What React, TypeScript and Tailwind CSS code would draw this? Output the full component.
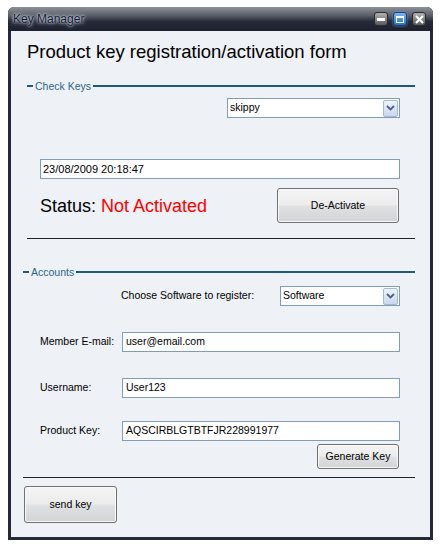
import React from "react";

const btn =
  "flex items-center justify-center rounded-[3px] border border-[#707070] bg-[linear-gradient(to_bottom,#f4f4f4_0%,#ececec_48%,#e0e1e2_52%,#d2d3d5_100%)] text-[10.5px] text-black shadow-[inset_0_0_0_1px_#fafafa]";

function Dropdown({ value, className }: { value: string; className: string }) {
  return (
    <div className={`flex h-[20px] items-center border border-[#7f9db9] bg-white ${className}`}>
      <span className="flex-1 pl-[2px] text-[10.5px] text-black">{value}</span>
      <div className="mr-[1px] flex h-[17px] w-[15px] items-center justify-center rounded-[2px] border border-[#a5b8d6] bg-[linear-gradient(to_bottom,#eef3fb,#c9d7ef)]">
        <svg width="9" height="6" viewBox="0 0 9 6">
          <path d="M1 1 L4.5 4.5 L8 1" fill="none" stroke="#4d6185" strokeWidth="1.8" />
        </svg>
      </div>
    </div>
  );
}

function TextBox({ value, className }: { value: string; className: string }) {
  return (
    <div className={`flex h-[20px] items-center border border-[#7f9db9] bg-white pl-[2px] text-[10.5px] text-black ${className}`}>
      {value}
    </div>
  );
}

function GroupHeader({ label, ml }: { label: string; ml: string }) {
  return (
    <div className={`flex h-[14px] items-center mr-[15px] ${ml}`}>
      <div className="h-[2px] w-[6px] bg-[#1c5a7d]" />
      <span className="px-[2px] text-[10.5px] leading-[14px] text-[#2a6690]">{label}</span>
      <div className="h-[2px] flex-1 bg-[#1c5a7d]" />
    </div>
  );
}

export default function App() {
  return (
    <div className="h-[549px] w-[442px] bg-white pl-[8px] pt-[7px] font-['Liberation_Sans',Arial,sans-serif]">
      <div className="flex h-[533px] w-[425px] flex-col rounded-t-[6px] bg-[#262a36]">
        {/* Title bar */}
        <div className="relative flex h-[24px] items-center rounded-t-[6px] bg-[linear-gradient(to_bottom,#8d9198_0%,#5a5e68_35%,#272b38_60%,#1d2130_100%)] pl-[5px]">
          <span className="text-[12px] text-[#111a33] [text-shadow:0_0_2px_#f0f5fc,0_0_4px_#d5e2f4]">
            Key Manager
          </span>
          <div className="ml-auto mr-[7px] flex items-center gap-[5px]">
            <div className="flex h-[14px] w-[14px] items-center justify-center rounded-[3px] border border-[#2a2a2a] bg-[linear-gradient(to_bottom,#b0b0b0,#5a5a5a)]">
              <div className="h-[3px] w-[8px] bg-white" />
            </div>
            <div className="flex h-[14px] w-[14px] items-center justify-center rounded-[3px] border border-[#1b3f73] bg-[linear-gradient(to_bottom,#7fb6ef,#2c6fc4)] shadow-[0_0_2px_#6aa8ee]">
              <div className="h-[7px] w-[8px] border-[1.5px] border-white border-t-[2.5px]" />
            </div>
            <div className="flex h-[14px] w-[14px] items-center justify-center rounded-[3px] border border-[#2a2a2a] bg-[linear-gradient(to_bottom,#b0b0b0,#5a5a5a)]">
              <svg width="9" height="9" viewBox="0 0 9 9">
                <path d="M1 1 L8 8 M8 1 L1 8" stroke="white" strokeWidth="2" />
              </svg>
            </div>
          </div>
        </div>
        {/* Client area */}
        <div className="mx-[3px] flex h-[506px] flex-col bg-[#eef1f5]">
          <div className="ml-[16px] mt-[9px] h-[24px] text-[18.5px] leading-[24px] text-black">
            Product key registration/activation form
          </div>

          <div className="mt-[15px]">
            <GroupHeader label="Check Keys" ml="ml-[16px]" />
          </div>

          <div className="mt-[5px] flex justify-end mr-[30px]">
            <Dropdown value="skippy" className="w-[173px]" />
          </div>

          <TextBox value="23/08/2009 20:18:47" className="ml-[29px] mt-[41px] w-[360px] text-[11px]" />

          <div className="ml-[29px] mr-[31px] mt-[9px] flex h-[35px] items-center justify-between">
            <div className="pt-[1px] text-[18px] text-black">
              Status: <span className="text-[#ff0000]">Not Activated</span>
            </div>
            <button className={`${btn} h-[35px] w-[122px]`}>De-Activate</button>
          </div>

          <div className="ml-[16px] mr-[15px] mt-[15px] h-[1px] bg-[#1f2330]" />

          <div className="mt-[26px]">
            <GroupHeader label="Accounts" ml="ml-[12px]" />
          </div>

          <div className="mt-[7px] flex h-[20px] items-center">
            <span className="ml-[110px] text-[10.5px] text-black">Choose Software to register:</span>
            <Dropdown value="Software" className="ml-auto mr-[30px] w-[120px]" />
          </div>

          <div className="mt-[26px] flex h-[20px] items-center">
            <span className="ml-[29px] text-[10.5px] text-black">Member E-mail:</span>
            <TextBox value="user@email.com" className="ml-auto mr-[30px] w-[278px] pl-[3px]" />
          </div>

          <div className="mt-[26px] flex h-[20px] items-center">
            <span className="ml-[29px] text-[10.5px] text-black">Username:</span>
            <TextBox value="User123" className="ml-auto mr-[30px] w-[278px] pl-[3px]" />
          </div>

          <div className="mt-[23px] flex h-[20px] items-center">
            <span className="ml-[29px] text-[10.5px] text-black">Product Key:</span>
            <TextBox value="AQSCIRBLGTBTFJR228991977" className="ml-auto mr-[30px] w-[278px] pl-[3px]" />
          </div>

          <div className="mt-[3px] flex justify-end mr-[31px]">
            <button className={`${btn} h-[25px] w-[82px]`}>Generate Key</button>
          </div>

          <div className="ml-[12px] mr-[15px] mt-[8px] h-[1px] bg-[#1f2330]" />

          <div className="mt-[8px] ml-[13px]">
            <button className={`${btn} h-[37px] w-[93px]`}>send key</button>
          </div>
        </div>
      </div>
    </div>
  );
}
